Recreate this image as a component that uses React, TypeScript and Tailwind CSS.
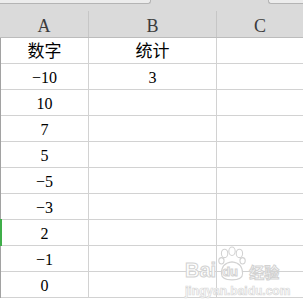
import React from "react";

// Column A values, top to bottom
const ROWS: { a: string; b?: string }[] = [
  { a: "数字", b: "统计" },
  { a: "−10", b: "3" },
  { a: "10" },
  { a: "7" },
  { a: "5" },
  { a: "−5" },
  { a: "−3" },
  { a: "2" },
  { a: "−1" },
  { a: "0" },
];

const serif = "font-['Liberation_Serif','Noto_Sans_CJK_SC',serif]";

export default function App() {
  return (
    <div className="relative w-[303px] h-[303px] overflow-hidden bg-white text-black">
      {/* Column header strip */}
      <div className="relative h-[38px] bg-[#dadada] border-b border-[#bcbcbc]">
        <div className="absolute left-0 top-0 w-[151px] h-[4px] bg-[#ececec] border-b border-r border-[#b4b4b4] rounded-br-[3px]" />
        <div className="absolute left-[268px] top-0 right-0 h-[4px] bg-[#ececec] border-b border-l border-[#b4b4b4] rounded-bl-[3px]" />
        <div className="flex h-full pt-[11px]">
          {["A", "B", "C"].map((c, i) => (
            <div
              key={c}
              className={`flex items-center justify-center pt-[4px] text-[18px] text-[#3c3c3c] ${serif} ${
                i === 0 ? "w-[89px] border-r border-[#c6c6c6]" : i === 1 ? "w-[128px] border-r border-[#c6c6c6]" : "flex-1"
              }`}
            >
              {c}
            </div>
          ))}
        </div>
      </div>

      {/* Body grid */}
      <div className="border-l border-[#a2a2a2]">
        {ROWS.map((r, i) => (
          <div key={i} className="relative flex h-[26px] border-b border-[#d2d2d2]">
            {i === 7 && <div className="absolute -left-px -top-px w-[2px] h-[27px] bg-[#3fae49]" />}
            <div className={`w-[88px] flex items-center justify-center pt-[3px] border-r border-[#d2d2d2] ${serif} ${i === 0 ? "text-[17px]" : "text-[16px]"}`}>
              {r.a}
            </div>
            <div className={`w-[128px] flex items-center justify-center pt-[3px] border-r border-[#d2d2d2] ${serif} ${i === 0 ? "text-[17px]" : "text-[16px]"}`}>
              {r.b}
            </div>
            <div className="flex-1" />
          </div>
        ))}
      </div>

      {/* Baidu jingyan watermark */}
      <div className="absolute left-[185px] top-[246px] whitespace-nowrap pointer-events-none">
        <div className="flex items-end h-[36px]">
          <span className="shrink-0 text-[20px] leading-none font-bold font-['Liberation_Sans',sans-serif] text-white [-webkit-text-stroke:1px_#d2d2d2] mb-[2px]">
            Bai
          </span>
          <div className="relative shrink-0 w-[32px] h-[36px]">
            <svg viewBox="0 0 30 34" className="absolute inset-0 w-[32px] h-[36px]" fill="white" stroke="#d2d2d2" strokeWidth="1">
              <ellipse cx="8" cy="7" rx="3" ry="4" />
              <ellipse cx="15" cy="5" rx="3" ry="4" />
              <ellipse cx="22" cy="7" rx="3" ry="4" />
              <ellipse cx="5" cy="14" rx="2.5" ry="3" />
              <ellipse cx="25" cy="14" rx="2.5" ry="3" />
              <path d="M5 26 Q5 16 15 15 Q25 16 25 26 Q25 32 15 32 Q5 32 5 26 Z" />
            </svg>
            <span className="absolute left-[6px] bottom-[4px] text-[13px] leading-none font-bold font-['Liberation_Sans',sans-serif] text-white [-webkit-text-stroke:1px_#d2d2d2]">
              du
            </span>
          </div>
          <span className="shrink-0 ml-[1px] text-[15px] leading-none font-bold font-['Noto_Sans_CJK_SC',sans-serif] text-white [-webkit-text-stroke:1px_#d2d2d2] mb-[3px]">
            经验
          </span>
        </div>
        <div className="text-[12px] leading-none mt-[3px] font-bold font-['Liberation_Sans',sans-serif] text-white [-webkit-text-stroke:0.7px_#d8d8d8]">
          jingyan.baidu.com
        </div>
      </div>
    </div>
  );
}
